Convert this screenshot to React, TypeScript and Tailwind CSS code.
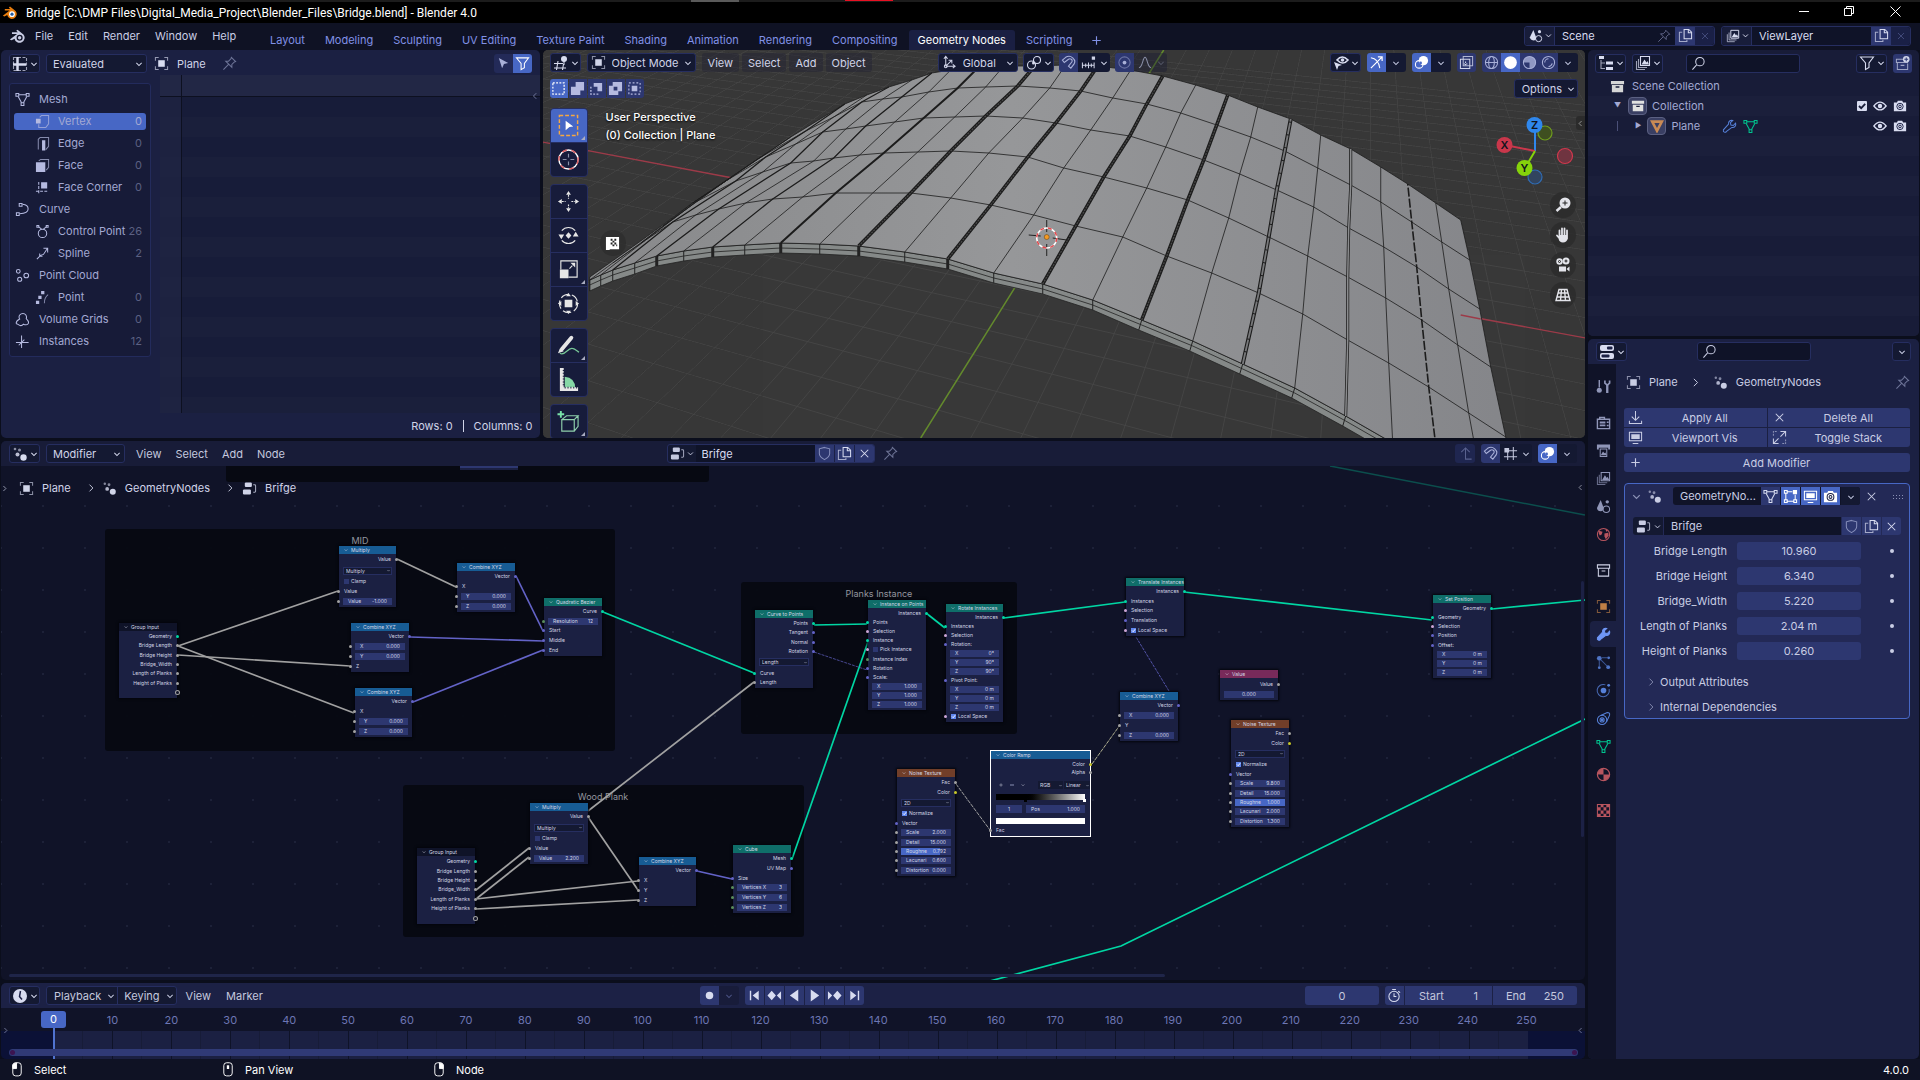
import React from "react";

type P = [number, number];

/* ---------- icons ---------- */

const SHAPES: Record<string, React.ReactNode> = {
  chev: <path d="M4.500 6.500 8 10l3.500-3.500" strokeWidth="1.400" />,
  chevR: <path d="M6 3.500 10.500 8 6 12.500" strokeWidth="1.200" />,
  chevL: <path d="M10 3.500 5.500 8l4.500 4.500" strokeWidth="1.200" />,
  x: <path d="M4 4l8 8M12 4l-8 8" strokeWidth="1.100" />,
  plus: <path d="M8 3.500v9M3.500 8h9" strokeWidth="1.200" />,
  object: (
    <>
      <path d="M1.500 5V1.500H5M11 1.500h3.500V5M14.500 11v3.500H11M5 14.500H1.500V11" opacity=".65" />
      <rect x="4.500" y="4.500" width="7" height="7" fill="currentColor" stroke="none" />
    </>
  ),
  pin: <path d="M10 1.500l4.500 4.500-1.500.5-2.500 2.500v3L4 5.500h3L9.500 3zM7 9l-5.500 5.500" opacity=".75" />,
  funnel: <path d="M1.500 2h13L10 8v4.500L6.500 14.500V8z" />,
  cursor: <path d="M3 2l10 5.500-4.500 1L6.500 13z" fill="currentColor" stroke="none" />,
  sheet: (
    <>
      <path d="M1.500 1.500h13v13h-13z" strokeDasharray="3 1.500" opacity=".7" />
      <path d="M5.500 1v14M1 8.500h13" strokeWidth="2.500" />
    </>
  ),
  view3d: (
    <>
      <path d="M1 8.500h9M1 13h12M5 6L3.500 15M10.500 9l-1 6" />
      <circle cx="11" cy="4" r="3" fill="currentColor" stroke="none" />
      <path d="M11 6v4" />
    </>
  ),
  geo: (
    <g fill="currentColor" stroke="none">
      <circle cx="11.500" cy="11.500" r="3.200" />
      <circle cx="5.500" cy="8.500" r="2" opacity=".85" />
      <circle cx="3" cy="3" r="1.300" opacity=".6" />
      <circle cx="7.500" cy="4" r="1.500" opacity=".6" />
    </g>
  ),
  tree: (
    <>
      <rect x="3" y="1.500" width="7.500" height="5" rx="1.200" fill="currentColor" stroke="none" />
      <rect x="1" y="9" width="8.500" height="5.500" rx="1.200" fill="currentColor" stroke="none" />
      <path d="M12 4h1.500q1 0 1 1v6q0 1-1 1H12" opacity=".8" />
    </>
  ),
  shield: <path d="M8 1.500l5.500 1.500v5c0 3-2.500 5-5.500 6.500C5 13 2.500 11 2.500 8V3z" opacity=".7" />,
  copy: (
    <>
      <path d="M6.500 1.500h5l3 3v7h-8z" />
      <path d="M11 1.500v3.500h3.500" />
      <path d="M4.500 4.500h-3v10h8v-2" opacity=".7" />
    </>
  ),
  search: (
    <>
      <circle cx="9.500" cy="6" r="4.500" />
      <path d="M6 9.500L1.500 14.500" />
    </>
  ),
  outliner: (
    <>
      <path d="M1 1h5v3H1zM8 6.500h7v3H8zM8 12h7v3H8z" fill="currentColor" stroke="none" />
      <path d="M3 5v8.500h4M3 8h4" opacity=".7" />
    </>
  ),
  layers: (
    <>
      <path d="M5.500 1.500h9v9h-9z" />
      <path d="M6.500 9.500l3-5 2 3 1-1.500 1.500 3.500z" fill="currentColor" stroke="none" />
      <path d="M3.500 4v8.500H12M1.500 6v8.500H10" opacity=".7" />
    </>
  ),
  scene: (
    <>
      <path d="M5 1l3 8q.5 4-3 4t-4-3.500z" fill="currentColor" stroke="none" />
      <circle cx="11" cy="11" r="3.500" />
      <circle cx="12" cy="3" r="1.800" fill="currentColor" stroke="none" />
    </>
  ),
  box: (
    <>
      <path d="M1 2h14v3.500H1zM2 6.500h12V14H2z" fill="currentColor" stroke="none" />
      <path d="M6 8.500h4" stroke="#181c38" strokeWidth="1.500" />
    </>
  ),
  boxLine: <path d="M1.500 2h13v3.500h-13zM2.500 5.500V14h11V5.500M6 8.500h4" />,
  boxPlus: (
    <>
      <path d="M9 3.500H1.500V7H14M2.500 7v7.500h11V8M6 10h4" opacity=".7" />
      <circle cx="12" cy="3.500" r="3.500" fill="currentColor" stroke="none" />
      <path d="M12 1.500v4M10 3.500h4" stroke="#2f3a75" />
    </>
  ),
  wrench: (
    <path d="M14.500 4.500l-2.500 2.500-2.500-.5-.5-2.500L11.500 1.500C9 .8 6.500 2.500 7 5.500L1.500 11.500q-.5 2 1 2.500t2-.5L10.500 9c3 .5 4.800-2 4-4.500z" />
  ),
  wrenchFill: (
    <path d="M14.500 4.500l-2.500 2.500-2.500-.5-.5-2.500L11.500 1.500C9 .8 6.500 2.500 7 5.500L1.500 11.500q-.5 2 1 2.500t2-.5L10.500 9c3 .5 4.800-2 4-4.500z" fill="currentColor" />
  ),
  mesh: (
    <>
      <path d="M4 3h8M3.500 5l3.500 6.500M12.500 5L9 11.500" />
      <path d="M1 1.500h3v3H1zM12 1.500h3v3h-3zM6.500 11.500h3v3h-3z" />
    </>
  ),
  tri: <path d="M2.500 3h11L8 13.500z" strokeWidth="3" />,
  eye: (
    <>
      <path d="M1 8q7-9 14 0-7 9-14 0z" strokeWidth="1.500" />
      <circle cx="8" cy="8" r="2.500" fill="currentColor" stroke="none" />
    </>
  ),
  camera: (
    <>
      <path d="M1 4h3.500L5.500 2h5l1 2H15v10H1z" fill="currentColor" stroke="none" />
      <circle cx="8" cy="8.500" r="3.600" stroke="#1c2145" />
      <circle cx="8" cy="8.500" r="1.500" stroke="#1c2145" />
    </>
  ),
  props: (
    <>
      <rect x="1" y="1" width="14" height="6" rx="2" fill="currentColor" stroke="none" />
      <rect x="1" y="9" width="14" height="6" rx="2" fill="currentColor" stroke="none" />
      <rect x="8" y="2.500" width="5.500" height="3" rx="1" fill="#1c2145" stroke="none" />
      <rect x="2.500" y="10.500" width="8" height="3" rx="1" fill="#1c2145" stroke="none" />
    </>
  ),
  tool: (
    <>
      <path d="M3.500 1v8" strokeWidth="1.500" />
      <path d="M12 6v9" strokeWidth="2.500" />
      <circle cx="3.500" cy="12" r="2.700" fill="currentColor" stroke="none" />
      <path d="M9.500 1.500v3l2.500 2 2.500-2v-3" strokeWidth="1.800" />
    </>
  ),
  render: (
    <>
      <path d="M1.500 4.500h13v10h-13zM4 4V2.500h5V4" strokeWidth="1.500" />
      <path d="M4 8h6M4 11h6" strokeWidth="2" />
      <path d="M12.500 7v1.500M12.500 10.500v1.500" strokeWidth="2" />
    </>
  ),
  output: (
    <>
      <path d="M1 1.500h14V7h-2V5H3v2H1z" fill="currentColor" stroke="none" />
      <path d="M4.500 6.500h7v8h-7z" />
      <path d="M5 13l2.500-4 1.500 2 1-1 1.500 3z" fill="currentColor" stroke="none" />
    </>
  ),
  world: (
    <>
      <circle cx="8" cy="8" r="6.500" />
      <path d="M3 4l4 1-1 3-2 1-1-2zM9 7l4-1 .5 3-3 4-1.500-3zM10 2l3 2-2 1z" fill="currentColor" stroke="none" />
    </>
  ),
  particles: (
    <>
      <circle cx="3.500" cy="3.500" r="2.500" fill="currentColor" stroke="none" />
      <circle cx="13.500" cy="3" r="1.500" fill="currentColor" stroke="none" />
      <circle cx="13" cy="13" r="2" fill="currentColor" stroke="none" />
      <circle cx="3.500" cy="13.500" r="1.500" fill="currentColor" stroke="none" />
      <path d="M6 3h6M3.500 6v6M5 5l7 7" opacity=".7" />
    </>
  ),
  physics: (
    <>
      <path d="M10 2A6.500 6.500 0 1 0 14 6.500" opacity=".8" />
      <circle cx="8" cy="8" r="3" fill="currentColor" stroke="none" />
      <circle cx="13.500" cy="2.500" r="1.500" fill="currentColor" stroke="none" />
    </>
  ),
  constraint: (
    <>
      <circle cx="6.500" cy="9.500" r="5" />
      <circle cx="6.500" cy="9.500" r="2.200" />
      <path d="M5 4.700L12 1.500q3 0 2.500 3L11.300 11.500" />
      <circle cx="6.500" cy="9.500" r="1" fill="currentColor" />
    </>
  ),
  material: (
    <>
      <circle cx="8" cy="8" r="6.500" strokeWidth="1.300" />
      <path d="M8 8V1.500A6.500 6.500 0 0 0 1.500 8zM8 8v6.500A6.500 6.500 0 0 0 14.500 8z" fill="currentColor" stroke="none" />
    </>
  ),
  checker: (
    <>
      <path d="M1.500 1.500h13v13h-13z" />
      <path d="M5 1h3v3.500H5zM11 1h3.500v3.500H11zM1.500 4.500H5V8H1.500zM8 4.500h3V8H8zM5 8h3v3.500H5zM11 8h3.500v3.500H11zM1.500 11.500H5V15H1.500zM8 11.500h3V15H8z" fill="currentColor" stroke="none" />
    </>
  ),
  download: <path d="M8 1v9.500M4 7l4 4 4-4M1.500 11.500v3h13v-3" />,
  monitor: (
    <>
      <path d="M1.500 2.500h13v9h-13zM5 14.500h6" />
      <path d="M3.500 4.500h9v5h-9z" fill="currentColor" stroke="none" />
    </>
  ),
  expand: (
    <>
      <path d="M9 1.500h5.500V7M14 2L9 7M7 14.500H1.500V9M2 14l5-5" />
      <path d="M1.500 6V1.500H6M14.500 10v4.500H10" strokeDasharray="2 1" opacity=".6" />
    </>
  ),
  editbox: (
    <>
      <path d="M3 4v8M4 13h8M13 12V6M4 3h6" />
      <path d="M1.500 1.500h3v3h-3zM1.500 11.500h3v3h-3zM11.500 11.500h3v3h-3z" />
      <path d="M10.500 1H15v4.500h-4.500z" fill="currentColor" stroke="none" />
    </>
  ),
  axes: (
    <>
      <path d="M4 12V2M2 4l2-2.500L6 4M4 12h9.500M11.500 10l2.500 2-2.500 2M4 12l6-6M7 5.500h3.500V9" />
      <circle cx="4" cy="12" r="1.500" />
    </>
  ),
  pivot: (
    <>
      <circle cx="5.500" cy="10" r="4" />
      <circle cx="11" cy="5" r="3.500" />
      <circle cx="7.500" cy="8" r="1.500" fill="currentColor" stroke="none" />
    </>
  ),
  magnet: <path d="M1.500 5.500L5 2.500q4-2.500 7.500.5T14 9.500L10.500 14 8 12l3.500-4.500q1-2-.5-3T8 4.500L3.500 8z" strokeWidth="1.200" />,
  snap: (
    <>
      <path d="M1 11h13M1.500 8v6M5 9v4M8 8v6M11 9v4M14 8v6" />
      <path d="M11.500 1.500H15V5h-3.500z" fill="currentColor" stroke="none" />
    </>
  ),
  snapNode: (
    <>
      <path d="M5 6v9M11 1v14M1 11.500h14M6 5h9" />
      <path d="M1.500 2h5v5h-5z" fill="currentColor" stroke="none" />
    </>
  ),
  dotring: (
    <>
      <circle cx="8" cy="8" r="6" opacity=".5" />
      <circle cx="8" cy="8" r="2" fill="currentColor" stroke="none" />
    </>
  ),
  bell: <path d="M1 13.500c4 0 4-11 6.500-11s2.500 11 6.500 11" />,
  eyeCursor: (
    <>
      <path d="M4 5q5-6 11 0-5 6-11 0z" strokeWidth="1.600" />
      <circle cx="9.500" cy="5" r="1.800" fill="currentColor" stroke="none" />
      <path d="M1 7l8 3-3.500 1L4 15z" fill="currentColor" stroke="none" />
    </>
  ),
  gizmo: (
    <>
      <path d="M2 14L13.500 2.500M9.500 2h4.500v4.500" strokeWidth="1.300" />
      <path d="M2 3q8 1 9.500 11" />
    </>
  ),
  overlay: (
    <>
      <circle cx="10" cy="6" r="5" fill="currentColor" stroke="none" />
      <circle cx="5.500" cy="10" r="4" />
      <circle cx="7" cy="8.500" r="1.500" fill="#4767c5" stroke="none" />
    </>
  ),
  xray: (
    <>
      <path d="M4.500 1.500h10v10h-10z" opacity=".8" />
      <path d="M1.500 4.500h10v10h-10z" />
      <path d="M7 7v5M5 9.500h4" strokeDasharray="1.500 1" />
    </>
  ),
  wire: (
    <>
      <circle cx="8" cy="8" r="6.500" />
      <ellipse cx="8" cy="8" rx="3" ry="6.500" />
      <path d="M1.500 8h13" />
    </>
  ),
  solid: <circle cx="8" cy="8" r="6.800" fill="currentColor" stroke="none" />,
  matprev: (
    <>
      <circle cx="8" cy="8" r="6.500" />
      <path d="M8 1.500A6.500 6.500 0 0 0 1.500 8H8v6.500A6.500 6.500 0 0 0 11 2.200z" fill="currentColor" stroke="none" opacity=".8" />
    </>
  ),
  rendered: (
    <>
      <circle cx="8" cy="8" r="6.500" />
      <path d="M4 8a4 4 0 0 1 4-4M12 9a5 5 0 0 1-4 3.500" />
    </>
  ),
  up: <path d="M3.500 6.500L8 2l4.500 4.500M8 2v12h6.500" />,
  clock: (
    <>
      <circle cx="8" cy="8" r="7" fill="currentColor" stroke="none" />
      <path d="M8.500 3L7.500 8.500 10 11.500" stroke="#1c2145" strokeWidth="1.500" />
    </>
  ),
  stopwatch: (
    <>
      <circle cx="7.500" cy="9" r="5.500" />
      <path d="M7.500 5.500V9H10M5.500 1.500h4M12 3.500l2 1.500" />
    </>
  ),
  record: <circle cx="8" cy="8" r="4" fill="currentColor" stroke="none" />,
  first: <path d="M3 3h1.500v10H3zM12.500 3v10L6 8z" fill="currentColor" stroke="none" />,
  last: <path d="M13 3h-1.500v10H13zM3.500 3v10L10 8z" fill="currentColor" stroke="none" />,
  prevKey: <path d="M5 3l4.500 5L5 13 .5 8zM15 3.500v9L10.500 8z" fill="currentColor" stroke="none" />,
  nextKey: <path d="M11 3l4.500 5-4.500 5-4.500-5zM1 3.500v9L5.500 8z" fill="currentColor" stroke="none" />,
  playBack: <path d="M12 1.500v13L3 8z" fill="currentColor" stroke="none" />,
  play: <path d="M4 1.500v13L13 8z" fill="currentColor" stroke="none" />,
  vertex: (
    <>
      <path d="M5 3.500L7 1.500h7.500v9l-3 4H4V11" opacity=".7" />
      <path d="M1 5h5v5H1z" fill="currentColor" stroke="none" />
    </>
  ),
  edge: (
    <>
      <path d="M3.500 14.500v-11l2-2h9v9.500l-3 3.500" opacity=".7" />
      <path d="M7.500 4.500H11v11H7.500z" fill="currentColor" stroke="none" />
    </>
  ),
  face: (
    <>
      <path d="M4 3l2-1.500h8.500V10L12 13" opacity=".7" />
      <path d="M1 4.500h10V15H1z" fill="currentColor" stroke="none" />
    </>
  ),
  corner: (
    <>
      <path d="M4 2v13M1 12h13" strokeDasharray="3 1.500" />
      <path d="M6.500 2.500H13V9H6.500z" fill="currentColor" stroke="none" />
    </>
  ),
  curve: (
    <>
      <path d="M8 2.500q6 .5 6 5T5 12.500" />
      <path d="M4.500 1.500h3v3h-3zM1.500 11.500h3v3h-3z" />
    </>
  ),
  control: (
    <>
      <circle cx="8" cy="10" r="4.500" />
      <path d="M4 3l3 2.500M12 3L9 5.500" />
      <path d="M2 1.500h2v2H2zM12 1.500h2v2h-2z" />
    </>
  ),
  spline: <path d="M2 14l4-4 3-1 4-6M9 2.500h4.500V7M5 8v3h3" />,
  cloud: (
    <>
      <circle cx="3.500" cy="3.500" r="2" />
      <circle cx="12" cy="8" r="2.500" />
      <circle cx="5" cy="12" r="2.200" />
    </>
  ),
  point: (
    <>
      <path d="M6.500 1H10v3.500H6.500zM3.500 6H7v3.500H3.500zM1 11.500h3.500V15H1z" fill="currentColor" stroke="none" />
      <path d="M14 5q-4 3-4 9" opacity=".7" />
    </>
  ),
  volume: <path d="M5 7.500C3 4 6 1.500 8.500 1.500S13 4 12 7q3.500 3.500 2 5.500t-5 .5q-2 2.500-4.500 1t-3-1.500q-1-2.500 3.500-5z" />,
  instances: <path d="M7 1.500v12M2 9h12.500M10 6l-6 6M1 9h3M7 11v4" />,
};

function Icon({ n, c = "", s = 15 }: { n: string; c?: string; s?: number }) {
  return (
    <svg viewBox="0 0 16 16" width={s} height={s} fill="none" stroke="currentColor" strokeWidth="1.100" className={`shrink-0 ${c}`} aria-hidden="true">
      {SHAPES[n]}
    </svg>
  );
}

/* ---------- shared widgets ---------- */

const BOX = "h-[19px] rounded-[3px] border border-[#262e60] bg-[#141932]";

function EditorBtn({ icon, label }: { icon: string; label: string }) {
  return (
    <button aria-label={label} className={`${BOX} flex w-[31px] shrink-0 items-center justify-between pl-[2px] text-[#d8dcf0]`}>
      <Icon n={icon} s={16} />
      <Icon n="chev" s={12} />
    </button>
  );
}

function Drop({ label, value, w, icon }: { label: string; value: string; w: string; icon?: string }) {
  return (
    <div className={`${BOX} ${w} relative flex shrink-0 items-center text-[#d0d4e8]`}>
      {icon && <Icon n={icon} c="ml-[3px]" />}
      <select aria-label={label} className="h-full min-w-0 flex-1 appearance-none bg-transparent px-[6px] outline-none">
        <option>{value}</option>
      </select>
      <Icon n="chev" s={12} c="pointer-events-none absolute right-px" />
    </div>
  );
}

function Btn({ icon, label, on, c = "" }: { icon: string; label: string; on?: boolean; c?: string }) {
  return (
    <button aria-label={label} className={`flex h-[19px] w-[19px] shrink-0 items-center justify-center ${on ? "bg-[#4767c5] text-white" : "bg-[#2d3770] text-[#a9b0d8]"} ${c}`}>
      <Icon n={icon} />
    </button>
  );
}

function Arrow({ label, c = "" }: { label: string; c?: string }) {
  return (
    <button aria-label={label} className={`flex h-[19px] w-[20px] shrink-0 items-center justify-center bg-[#141932] text-[#c0c5de] ${c}`}>
      <Icon n="chev" s={12} />
    </button>
  );
}

/* ---------- top bars ---------- */

function BlenderMark({ color, eye, c }: { color: string; eye: string; c: string }) {
  return (
    <svg viewBox="0 0 20 16" className={c} aria-hidden="true">
      <path d="M1 11.500L9.500 5H3.500V3h7L8.500 1.300 10 0l7 5.500a6 6 0 1 1-10.500 5L3 12.500z" fill={color} />
      <circle cx="12.500" cy="9.500" r="3.600" fill={eye === "#255a9b" ? "#fff" : "#101328"} />
      <circle cx="12.500" cy="9.500" r="2" fill={eye} />
    </svg>
  );
}

function TitleBar() {
  return (
    <header className="relative flex h-[23px] shrink-0 items-center bg-black pt-[2px] pr-[2px] text-white">
      <div className="absolute inset-x-0 top-0 h-[2px] bg-[#1c1c1c]">
        <div className="absolute left-[36%] h-[2px] w-[48px] bg-[#5a5a5a]" />
        <div className="absolute left-[44%] h-px w-[48px] bg-[#e81123]" />
      </div>
      <BlenderMark color="#e87d0d" eye="#255a9b" c="ml-[2px] h-[14px] w-[16px]" />
      <h1 className="ml-[8px] flex-1 font-[Roboto,sans-serif] text-[12px] leading-[16px]">
        Bridge [C:\DMP Files\Digital_Media_Project\Blender_Files\Bridge.blend] - Blender 4.0
      </h1>
      <button aria-label="Minimize" className="flex h-[20px] w-[46px] items-center justify-center pb-[3px]">
        <svg width="10" height="10" stroke="#fff" aria-hidden="true"><path d="M0 5.500h10" /></svg>
      </button>
      <button aria-label="Restore" className="flex h-[20px] w-[45px] items-center justify-center pb-[3px]">
        <svg width="11" height="11" stroke="#fff" fill="none" aria-hidden="true"><path d="M.5 2.500h7v7h-7zM2.500 2.500v-2h7v7h-2" /></svg>
      </button>
      <button aria-label="Close" className="flex h-[20px] w-[46px] items-center justify-center pb-[3px]">
        <svg width="11" height="11" stroke="#fff" aria-hidden="true"><path d="M.5.5l10 10M10.500.5l-10 10" /></svg>
      </button>
    </header>
  );
}

const TABS = ["Layout", "Modeling", "Sculpting", "UV Editing", "Texture Paint", "Shading", "Animation", "Rendering", "Compositing", "Geometry Nodes", "Scripting"];

function DataBlock({ icon, name, w, pin }: { icon: string; name: string; w: string; pin?: boolean }) {
  return (
    <div className="flex h-[20px] items-center rounded-[3px] border border-[#262e60] bg-[#0f1328]">
      <button aria-label={`Browse ${name}`} className="flex h-full w-[30px] items-center justify-between rounded-l-[3px] border-r border-[#262e60] bg-[#181d3a] pl-[4px] text-[#d8dcf0]">
        <Icon n={icon} s={14} />
        <Icon n="chev" s={11} />
      </button>
      <input aria-label={`${name} name`} defaultValue={name} className={`${w} bg-transparent px-[7px] text-[#d8dcf0] outline-none`} />
      {pin && <Icon n="pin" s={14} c="mr-[4px] text-[#7c82a8]" />}
      <button aria-label={`New ${name}`} className="flex h-full w-[20px] items-center justify-center bg-[#2d3770] text-[#d8dcf0]">
        <Icon n="copy" />
      </button>
      <button aria-label={`Delete ${name}`} className="flex h-full w-[19px] items-center justify-center rounded-r-[3px] bg-[#1a2046] text-[#4a5284]">
        <Icon n="x" s={12} />
      </button>
    </div>
  );
}

function TopBar() {
  return (
    <div className="flex h-[27px] shrink-0 items-center bg-[#0f1224]">
      <BlenderMark color="#c9cde4" eye="#c9cde4" c="ml-[9px] h-[15px] w-[17px]" />
      <nav aria-label="Main menu" className="ml-[9px] flex w-[226px] gap-[15px] pb-[2px] text-[#c9cde4]">
        {["File", "Edit", "Render", "Window", "Help"].map((m) => (
          <button key={m}>{m}</button>
        ))}
      </nav>
      <div role="tablist" className="flex h-[20px] flex-1 items-center gap-[2px] self-end text-[#8191e6]">
        {TABS.map((t) => (
          <button key={t} role="tab" aria-selected={t === "Geometry Nodes"} className={`h-full rounded-t-[3px] px-[9px] whitespace-nowrap ${t === "Geometry Nodes" ? "bg-[#1a1f42] text-white" : ""}`}>
            {t}
          </button>
        ))}
        <button aria-label="Add workspace" className="ml-[6px]"><Icon n="plus" /></button>
      </div>
      <div className="mr-[9px] flex gap-[6px] pb-[2px]">
        <DataBlock icon="scene" name="Scene" w="w-[102px]" pin />
        <DataBlock icon="layers" name="ViewLayer" w="w-[119px]" />
      </div>
    </div>
  );
}

/* ---------- spreadsheet ---------- */

const DOMAINS: [string, string, string, number][] = [
  ["mesh", "Mesh", "", 0],
  ["vertex", "Vertex", "0", 1],
  ["edge", "Edge", "0", 1],
  ["face", "Face", "0", 1],
  ["corner", "Face Corner", "0", 1],
  ["curve", "Curve", "", 0],
  ["control", "Control Point", "26", 1],
  ["spline", "Spline", "2", 1],
  ["cloud", "Point Cloud", "", 0],
  ["point", "Point", "0", 1],
  ["volume", "Volume Grids", "0", 0],
  ["instances", "Instances", "12", 0],
];

function Spreadsheet() {
  return (
    <section className="flex w-[34%] flex-col overflow-hidden rounded-[5px] bg-[#1b2042]">
      <div className="flex h-[25px] shrink-0 items-center px-[8px] pt-[2px]">
        <EditorBtn icon="sheet" label="Spreadsheet editor" />
        <div className="w-[6px]" />
        <Drop label="Evaluation state" value="Evaluated" w="w-[101px]" />
        <Icon n="object" c="ml-[7px] text-[#d8dcf0]" />
        <span className="ml-[8px] text-[#d0d4e8]">Plane</span>
        <Icon n="pin" c="ml-[16px] text-[#8a90b4]" />
        <div className="flex-1" />
        <Btn icon="cursor" label="Selected only" c="rounded-l-[3px] bg-[#232a58]!" />
        <Btn icon="funnel" label="Filter" on c="rounded-r-[3px]" />
      </div>
      <div className="flex min-h-0 flex-1">
        <ul className="m-[8px] mr-[9px] flex h-[274px] w-[142px] shrink-0 flex-col rounded-[3px] border border-[#232b5c] bg-[#171b38] px-[4px] pt-[4px] text-[#a3a9d3]">
          {DOMAINS.map(([icon, name, count, lvl]) => (
            <li key={name} className="flex h-[22px] items-center">
              <button className={`flex h-[17px] w-full items-center rounded-[3px] pr-[4px] ${lvl ? "pl-[21px]" : "pl-px"} ${name === "Vertex" ? "bg-[#4767c5]" : ""}`}>
                <Icon n={icon} c="text-[#b5bae0]" />
                <span className={`flex-1 text-left whitespace-nowrap ${lvl ? "ml-[8px]" : "ml-[9px]"}`}>{name}</span>
                <span className={name === "Vertex" ? "text-[#a3a9d3]" : "text-[#5b6082]"}>{count}</span>
              </button>
            </li>
          ))}
        </ul>
        <div className="relative flex min-w-0 flex-1 flex-col bg-[#191e3a]">
          <div className="flex h-[22px] shrink-0 border-b border-[#0d1020] bg-[#222745]">
            <div className="w-[22px] border-r border-[#0d1020]" />
          </div>
          <div className="flex-1 bg-[repeating-linear-gradient(#171c39_0_20px,#1a1f3b_20px_40px)]">
            <div className="h-full w-[22px] border-r border-[#0d1020] bg-[#2227459e]" />
          </div>
          <span className="absolute top-[14px] right-0 flex h-[14px] items-center text-[#8a90b4]"><Icon n="chevL" s={10} /></span>
        </div>
      </div>
      <div className="flex h-[25px] shrink-0 items-center justify-end gap-[10px] pr-[7px] text-[#d0d4e8]">
        <span>Rows: 0</span>
        <span className="h-[12px] w-px bg-[#d0d4e8]" />
        <span>Columns: 0</span>
      </div>
    </section>
  );
}

/* ---------- 3D viewport ---------- */

/* Each rib runs from the front edge of the bridge to the back edge. */
const RIBS: { p: P[]; k: number }[] = [
  { k: 0, p: [[589, 280], [612, 263], [640, 243], [662, 226], [692, 203], [731, 177]] },
  { k: 0, p: [[600, 275], [645, 240], [695, 202], [725, 181], [757, 159], [790, 137]] },
  { k: 1, p: [[612, 270], [672, 222], [735, 181], [765, 157], [805, 131], [844, 104]] },
  { k: 0, p: [[634, 263], [695, 215], [762, 172], [795, 144], [833, 117], [866, 95]] },
  { k: 2, p: [[656, 256], [718, 209], [790, 163], [822, 132], [861, 102], [888, 87]] },
  { k: 0, p: [[683, 251], [745, 203], [813, 161], [845, 129], [882, 99], [911, 80]] },
  { k: 2, p: [[712, 247], [772, 199], [833, 158], [865, 126], [901, 97], [931, 73]] },
  { k: 0, p: [[744, 245], [802, 197], [859, 155], [894, 122], [928, 92], [950, 70]] },
  { k: 3, p: [[780, 243], [835, 193], [883, 153], [923, 118], [957, 88], [977, 68]] },
  { k: 0, p: [[819, 244], [872, 193], [917, 152], [954, 117], [985, 87], [1003, 66]] },
  { k: 4, p: [[858, 246], [910, 193], [950, 151], [985, 116], [1017, 86], [1034, 66]] },
  { k: 0, p: [[904, 252], [950, 198], [988, 153], [1022, 118], [1049, 88], [1065, 65]] },
  { k: 4, p: [[947, 259], [990, 205], [1027, 157], [1055, 123], [1080, 91], [1097, 66]] },
  { k: 0, p: [[993, 273], [1033, 215], [1063, 168], [1090, 130], [1112, 98], [1130, 70]] },
  { k: 4, p: [[1042, 284], [1075, 226], [1103, 177], [1129, 136], [1146, 104], [1162, 76]] },
  { k: 0, p: [[1092, 300], [1122, 237], [1146, 188], [1165, 147], [1180, 113], [1195, 85]] },
  { k: 5, p: [[1141, 320], [1166, 256], [1187, 200], [1203, 160], [1216, 125], [1227, 95]] },
  { k: 0, p: [[1192, 341], [1211, 273], [1228, 218], [1239, 174], [1250, 137], [1257, 107]] },
  { k: 6, p: [[1242, 364], [1258, 293], [1268, 237], [1276, 190], [1284, 151], [1290, 119]] },
  { k: 0, p: [[1294, 388], [1302, 314], [1307, 256], [1313, 207], [1317, 168], [1320, 135]] },
  { k: 7, p: [[1345, 416], [1347, 340], [1347, 277], [1348, 228], [1350, 185], [1350, 149]] },
  { k: 0, p: [[1392, 443], [1388, 363], [1385, 298], [1383, 247], [1380, 202], [1380, 167]] },
  { k: 8, p: [[1438, 470], [1428, 387], [1421, 320], [1416, 267], [1411, 222], [1407, 184]] },
  { k: 0, p: [[1485, 505], [1468, 413], [1457, 345], [1448, 289], [1441, 242], [1435, 203]] },
  { k: 0, p: [[1525, 530], [1505, 437], [1490, 367], [1479, 309], [1469, 260], [1460, 220]] },
];

const line = (pts: P[]) => pts.map((p) => p.join(",")).join(" ");

function BridgeDrawing() {
  const front = RIBS.map((r) => r.p[0]);
  const back = RIBS.map((r) => r.p[5]);
  const under = front.map(([x, y]): P => [x - (x > 1100 ? 3 : 0), y + (x < 640 ? 11 : 10)]);
  const mid = front.map(([x, y]): P => [x, y + 5]);
  const right = [...RIBS[RIBS.length - 1].p];
  const last = RIBS.length - 1;
  const sil: P[] = [...front, ...right.slice(1), ...[...back].reverse(), [692, 203], [640, 241], [589, 277]];
  const gridY = Array.from({ length: 70 }, (_, i) => 920 + (i - 38) * 50);
  const gridX = Array.from({ length: 50 }, (_, i) => 2117 - (i - 20) * 135);
  return (
    <svg viewBox="542 50 1043 388" preserveAspectRatio="xMidYMid slice" className="absolute inset-0 h-full w-full" role="img" aria-label="Bridge model in perspective">
      <defs>
        <linearGradient id="deck" x1="0" x2="1">
          <stop offset="0" stopColor="#88898b" />
          <stop offset=".45" stopColor="#969799" />
          <stop offset="1" stopColor="#848589" />
        </linearGradient>
      </defs>
      <rect x="542" y="50" width="1043" height="388" fill="#383838" />
      <g stroke="#484848" strokeWidth="1">
        {gridY.map((x) => <line key={x} x1="1370" y1="-282" x2={1370 + (x - 1370) * 1.2} y2={-282 + 720 * 1.2} opacity=".8" />)}
        {gridX.map((x) => <line key={x} x1="-1157" y1="-177" x2={-1157 + (x + 1157) * 2} y2={-177 + 615 * 2} opacity=".8" />)}
      </g>
      <path d="M542 142L732 178M1460 315L1585 338" stroke="#9c3a48" strokeWidth="1.300" />
      <path d="M1163 50L920 438" stroke="#638a2c" strokeWidth="1.500" />
      <polygon points={line([...front, ...[...under].reverse()])} fill="#858988" stroke="#222" strokeWidth=".8" />
      <polyline points={line(mid)} fill="none" stroke="#222" strokeWidth=".8" />
      {front.map(([x, y], i) => (
        <line key={i} x1={x} y1={y} x2={under[i][0]} y2={under[i][1]} stroke="#222" strokeWidth={RIBS[i].k > 1 && x < 1000 ? 3 : 1} />
      ))}
      <polygon points={line(sil)} fill="url(#deck)" stroke="#1c1c1c" strokeWidth=".8" />
      <g fill="none" stroke="#1c1c1c">
        {[1, 2, 3, 4].map((i) => <polyline key={i} points={line(RIBS.map((r) => r.p[i]))} strokeWidth=".8" />)}
        {RIBS.slice(0, last).map((r, i) => {
          const w = r.k === 0 ? 0.8 : r.k < 3 ? 1.3 : r.k === 3 ? 2 : r.k < 6 ? 3.6 : r.k === 6 ? 4 : r.k === 7 ? 3 : 1.6;
          return (
            <g key={i}>
              <polyline points={line(r.p)} strokeWidth={w} strokeDasharray={r.k === 8 ? "9 2" : undefined} />
              {r.k > 3 && r.k < 6 && <polyline points={line(r.p)} stroke="#4a4a4a" strokeWidth="1.200" strokeDasharray="2 1" />}
              {r.k === 6 && <polyline points={line(r.p)} stroke="#77787a" strokeWidth="1.800" strokeDasharray="12 1" />}
              {r.k === 7 && <polyline points={line(r.p)} stroke="#8a8b8d" strokeWidth="1.500" />}
            </g>
          );
        })}
      </g>
      <path d="M1460 315L1480 319" stroke="#9c3a48" strokeWidth="1.300" />
      <g fill="none">
        <path d="M1046 220v12M1046 244v12M1028 235l12 1M1052 238l14 2" stroke="#222" />
        <circle cx="1046" cy="238" r="10" stroke="#fff" strokeWidth="1.500" />
        <circle cx="1046" cy="238" r="10" stroke="#e0484c" strokeWidth="1.500" strokeDasharray="4 4" />
        <circle cx="1046" cy="237" r="2.500" fill="#f59a23" stroke="#5a3a10" strokeWidth=".5" />
      </g>
    </svg>
  );
}

function AxisGizmo() {
  return (
    <svg viewBox="0 0 80 80" className="absolute top-[62px] right-[10px] h-[80px] w-[80px]" role="img" aria-label="View axes">
      <path d="M40 39V13" stroke="#2f87ec" strokeWidth="2" />
      <path d="M40 39L10 33" stroke="#c9374b" strokeWidth="2" />
      <path d="M40 39L30 56" stroke="#86d30b" strokeWidth="2" />
      <circle cx="50" cy="21" r="7" fill="#3f4f20" stroke="#6f9c1e" strokeWidth="1.200" />
      <circle cx="70" cy="44" r="7.500" fill="#6f3440" stroke="#d0384d" strokeWidth="1.200" />
      <circle cx="40" cy="65" r="7" fill="#31445f" stroke="#2f6cb4" strokeWidth="1.200" />
      <circle cx="39.500" cy="13" r="8" fill="#2f87ec" />
      <circle cx="9.500" cy="33" r="8" fill="#c9374b" />
      <circle cx="29.500" cy="56" r="8" fill="#86d30b" />
      <g fontSize="11" fontWeight="600" textAnchor="middle" fill="#10131c">
        <text x="39.500" y="17">Z</text>
        <text x="9.500" y="37">X</text>
        <text x="29.500" y="60">Y</text>
      </g>
    </svg>
  );
}

const TOOLS: { name: string; more?: boolean; art: React.ReactNode }[][] = [
  [
    {
      name: "Select Box",
      more: true,
      art: (
        <>
          <rect x="2.500" y="1.500" width="19" height="21" stroke="#f5a742" strokeWidth="1.500" strokeDasharray="4 2" />
          <path d="M9 7l8 6-4 .5L9 17z" fill="#fff" stroke="none" />
        </>
      ),
    },
    {
      name: "Cursor",
      art: (
        <>
          <circle cx="12" cy="12" r="10" stroke="#fff" strokeWidth="1.500" />
          <circle cx="12" cy="12" r="10" stroke="#d85a5e" strokeWidth="1.500" strokeDasharray="5 5" />
          <path d="M12 6v4M12 14v4M6 12h4M14 12h4" stroke="#8a90a8" />
        </>
      ),
    },
  ],
  [
    {
      name: "Move",
      art: (
        <>
          <path d="M12 1l2.500 4h-5zM12 23l2.500-4h-5zM1 12l4-2.500v5zM23 12l-4-2.500v5z" fill="#e6e6e6" stroke="none" />
          <path d="M12 5v4M12 15v4M5 12h4M15 12h4" strokeDasharray="2 1" />
        </>
      ),
    },
    {
      name: "Rotate",
      art: (
        <>
          <path d="M5 7a9 9 0 0 1 14 0M19 17a9 9 0 0 1-14 0" />
          <path d="M1.500 11h6l-3 5zM16.500 13h6l-3-5zM12 8.500l3 3.500-3 3.500L9 12z" fill="#e6e6e6" stroke="none" />
        </>
      ),
    },
    {
      name: "Scale",
      more: true,
      art: (
        <>
          <path d="M4 12V3h17v17h-9" />
          <path d="M3 12h9v9H3z" fill="#e6e6e6" stroke="none" />
          <path d="M13 11l3-3" />
          <path d="M19 5v5l-5-5z" fill="#e6e6e6" stroke="none" />
        </>
      ),
    },
    {
      name: "Transform",
      art: (
        <>
          <circle cx="12" cy="12" r="9.500" strokeDasharray="9 3" />
          <path d="M8 8h8v8H8zM12 1l2.500 3.500h-5zM12 23l2.500-3.500h-5zM1 12l3.500-2.500v5zM23 12l-3.500-2.500v5z" fill="#e6e6e6" stroke="none" />
        </>
      ),
    },
  ],
  [
    {
      name: "Annotate",
      more: true,
      art: (
        <>
          <path d="M5 16L15 4" strokeWidth="4" strokeLinecap="round" />
          <path d="M1 20l2-5 4 3z" fill="#e6e6e6" stroke="none" />
          <path d="M3 20c5 4 8-6 13-5 3 .5 4 2 7 4" stroke="#78c898" />
        </>
      ),
    },
    {
      name: "Measure",
      art: (
        <>
          <path d="M8 21V9q11 1 11 12z" fill="#86d8a6" stroke="none" />
          <path d="M5 0v22h17" strokeWidth="4" />
          <path d="M7 2v18M8 20.500h14" stroke="#171c3b" strokeDasharray="1 2" strokeWidth="2" />
        </>
      ),
    },
  ],
  [
    {
      name: "Add Cube",
      more: true,
      art: (
        <>
          <path d="M5 10h13v12H5zM5 10l5-4h12l-4 4M22 6v11l-4 5" stroke="#8fd0ac" />
          <path d="M4 1v7M.5 4.500h7" stroke="#78e0a8" strokeWidth="2" />
        </>
      ),
    },
  ],
];

const NAV: [string, React.ReactNode][] = [
  ["Zoom", <g key="z"><circle cx="10" cy="6" r="5.500" fill="#e3e4ea" stroke="none" /><path d="M6 10L1.500 14" strokeWidth="2.500" /><path d="M10 3.500v5M7.500 6h5" stroke="#222" /></g>],
  ["Pan", <path d="M4.500 9V3.500M7 8V1.500M9.500 8V1.500M12 9V3.500M2 8.500l3 3.500M5 9h7v2.500q-1 3-4 3t-3.500-3z" strokeWidth="1.800" strokeLinecap="round" strokeLinejoin="round" fill="#e3e4ea" key="h" />],
  ["Camera view", <g key="c"><circle cx="4.500" cy="4.500" r="3.200" fill="#e3e4ea" stroke="none" /><circle cx="11" cy="4" r="3.500" fill="#e3e4ea" stroke="none" /><path d="M4 9.500h7v5H4zM11.500 12l3-2.500v5z" fill="#e3e4ea" stroke="none" /><circle cx="4.500" cy="4.500" r="1" stroke="#222" /><circle cx="11" cy="4" r="1" stroke="#222" /></g>],
  ["Toggle projection", <path d="M4 2.500h8l3 11H1zM3 6h10M2 10h12M6.500 2.500l-1 11M9.500 2.500l1 11" strokeWidth="1.400" key="p" />],
];

const SELECT_MODES: React.ReactNode[] = [
  <path key="a" d="M2 2h12v12H2z" strokeDasharray="2 1.500" strokeWidth="1.300" />,
  <path key="b" d="M6 1h9v9h-4v5H1V6h5z" fill="currentColor" stroke="none" />,
  <g key="c"><path d="M5 2h9v9H9V6H5z" fill="currentColor" stroke="none" /><path d="M2 6v8h8" strokeDasharray="2 1.500" strokeWidth="1.500" /></g>,
  <path key="d" d="M5 1h10v10h-4v4H1V5h4zM6 6v4h4V6z" fill="currentColor" stroke="none" fillRule="evenodd" />,
  <g key="e"><path d="M2 2h12v12H2z" strokeDasharray="2 2" strokeWidth="1.200" /><path d="M5 5h6v6H5z" fill="currentColor" stroke="none" /></g>,
];

function Viewport() {
  return (
    <section className="relative min-w-0 flex-1 overflow-hidden rounded-[5px] bg-[#383838]">
      <BridgeDrawing />
      <div className="relative flex h-full flex-col px-[7px] pt-[3px]">
        <div className="flex items-center text-[#d0d4e8]">
          <EditorBtn icon="view3d" label="3D Viewport editor" />
          <div className="w-[6px]" />
          <Drop label="Mode" value="Object Mode" w="w-[109px]" icon="object" />
          <div className="ml-[6px] flex gap-[3px]">
            {["View", "Select", "Add", "Object"].map((m) => <button key={m} className="h-[19px] rounded-[3px] bg-[#23243480] px-[6px]">{m}</button>)}
          </div>
          <div className="flex flex-1 items-center gap-[5px] pl-[66px]">
            <Drop label="Transform orientation" value="Global" w="w-[80px]" icon="axes" />
            <EditorBtn icon="pivot" label="Pivot point" />
            <div className="flex overflow-hidden rounded-[3px]">
              <Btn icon="magnet" label="Snap" />
              <button aria-label="Snap to" className="flex h-[19px] w-[32px] items-center justify-between bg-[#141932] pl-[3px]"><Icon n="snap" /><Icon n="chev" s={12} /></button>
            </div>
            <div className="flex overflow-hidden rounded-[3px]">
              <Btn icon="dotring" label="Proportional editing" />
              <button aria-label="Falloff" className="flex h-[19px] w-[33px] items-center justify-between bg-[#14193260] pl-[4px] text-[#8a90a8]"><Icon n="bell" /><Icon n="chev" s={12} c="opacity-40" /></button>
            </div>
          </div>
          <div className="flex gap-[6px]">
            <EditorBtn icon="eyeCursor" label="Object visibility" />
            <div className="flex overflow-hidden rounded-[3px]"><Btn icon="gizmo" label="Show gizmo" on /><Arrow label="Gizmo options" /></div>
            <div className="flex overflow-hidden rounded-[3px]"><Btn icon="overlay" label="Show overlays" on /><Arrow label="Overlay options" /></div>
            <Btn icon="xray" label="X-ray" c="rounded-[3px] text-[#d0d4e8]!" />
            <div className="flex overflow-hidden rounded-[3px]">
              <Btn icon="wire" label="Wireframe shading" />
              <Btn icon="solid" label="Solid shading" on />
              <Btn icon="matprev" label="Material preview" />
              <Btn icon="rendered" label="Rendered shading" />
              <Arrow label="Shading options" />
            </div>
          </div>
        </div>
        <div className="mt-[7px] flex justify-between">
          <div className="flex gap-px overflow-hidden rounded-[3px]">
            {SELECT_MODES.map((art, i) => (
              <button key={i} aria-label={`Selection mode ${i + 1}`} className={`flex h-[19px] w-[18px] items-center justify-center ${i === 0 ? "bg-[#4767c5] text-white" : "bg-[#2d3770] text-[#b5bae0]"}`}>
                <svg viewBox="0 0 16 16" width="15" height="15" fill="none" stroke="currentColor" aria-hidden="true">{art}</svg>
              </button>
            ))}
          </div>
          <button className={`${BOX} flex items-center gap-[3px] pl-[7px] text-[#d0d4e8]`}>Options <Icon n="chev" s={12} /></button>
        </div>
        <div className="mt-[10px] flex flex-1 gap-[18px]">
          <div className="flex w-[38px] shrink-0 flex-col gap-[7px]">
            {TOOLS.map((g, gi) => (
              <div key={gi} className="flex shrink-0 flex-col gap-px overflow-hidden rounded-[4px] border border-[#262e60] bg-[#262e60]">
                {g.map((t) => (
                  <button key={t.name} aria-label={t.name} className={`relative flex h-[33px] items-center justify-center ${t.name === "Select Box" ? "bg-[#4767c5]" : "bg-[#171c3b]"}`}>
                    <svg viewBox="0 0 24 24" width="23" height="23" fill="none" stroke="#e6e6e6" strokeWidth="1.200" aria-hidden="true">{t.art}</svg>
                    {t.more && <svg className="absolute right-[2px] bottom-[2px]" width="4" height="4" aria-hidden="true"><path d="M4 0v4H0z" fill="#a9acc0" /></svg>}
                  </button>
                ))}
              </div>
            ))}
          </div>
          <div className="leading-[18px] font-medium text-white [text-shadow:0_1px_2px_#000]">
            <p>User Perspective</p>
            <p>(0) Collection | Plane</p>
          </div>
        </div>
      </div>
      <div className="absolute top-[180px] left-[57px] flex h-[26px] w-[26px] items-center justify-center rounded-full bg-[#2d2d2dcc] text-white">
        <svg viewBox="0 0 16 16" width="15" height="15" aria-hidden="true"><path d="M1 1h14v13H5v1H1z" fill="#fff" /><path d="M6 3h2v2H6zM10 3h2v2h-2zM8 5h2v2H8zM6 7h2v2H6zM10 7h2v2h-2zM8 9h2v2H8zM12 9h1v2h-1z" fill="#222" /></svg>
      </div>
      <AxisGizmo />
      <div className="absolute top-[142px] right-[9px] flex flex-col gap-[4px]">
        {NAV.map(([n, art]) => (
          <button key={n} aria-label={n} className="flex h-[26px] w-[26px] items-center justify-center rounded-full bg-[#2b2b2bcc]">
            <svg viewBox="0 0 16 16" width="16" height="16" fill="none" stroke="#e3e4ea" aria-hidden="true">{art}</svg>
          </button>
        ))}
      </div>
      <span className="absolute top-[66px] right-0 flex h-[14px] items-center rounded-l-[3px] bg-[#2b2b2b] text-[#c0c0c0]"><Icon n="chevL" s={9} /></span>
    </section>
  );
}

/* ---------- node editor ---------- */

type Row =
  | { t: "out" | "in"; l: string; c?: string }
  | { t: "num"; l: string; v: string; c?: string; fill?: string }
  | { t: "sel"; l: string }
  | { t: "chk"; l: string; on?: boolean; c?: string }
  | { t: "ramp" };

const G = "bg-[#00d6a3]";
const V = "bg-[#6363c7]";
const F = "bg-[#a1a1a1]";
const Y = "bg-[#c7c729]";
const I = "bg-[#598c5c]";
const B = "bg-[#cca6d6]";

const out = (l: string, c = F): Row => ({ t: "out", l, c });
const inp = (l: string, c?: string): Row => ({ t: "in", l, c });
const num = (l: string, v: string, c?: string, fill?: string): Row => ({ t: "num", l, v, c, fill });

type NodeDef = { x: number; y: number; w: number; h: number; title: string; k: keyof typeof HEAD; rows: Row[]; sel?: boolean };

const HEAD = {
  conv: "bg-[#175c94]",
  geo: "bg-[#0f6e69]",
  input: "bg-[#0f1328]",
  tex: "bg-[#713e29]",
  val: "bg-[#782a5a]",
};

const GROUP: Row[] = [out("Geometry", G), out("Bridge Length"), out("Bridge Height"), out("Bridge_Width"), out("Length of Planks"), out("Height of Planks"), out("", "bg-[#101328] ring-1 ring-[#a1a1a1]")];

const noise = (scale: string, rough: string, fill: string, lac: string, dist: string): Row[] => [
  out("Fac"), out("Color", Y), { t: "sel", l: "2D" }, { t: "chk", l: "Normalize", on: true }, inp("Vector", V),
  num("Scale", scale, F), num("Detail", "15.000", F), num("Roughne", rough, F, fill), num("Lacunari", lac, F), num("Distortion", dist, F),
];

const NODES: NodeDef[] = [
  { x: 119, y: 623, w: 58, h: 75, title: "Group Input", k: "input", rows: GROUP },
  { x: 339, y: 546, w: 57, h: 61, title: "Multiply", k: "conv", rows: [out("Value"), { t: "sel", l: "Multiply" }, { t: "chk", l: "Clamp" }, inp("Value", F), num("Value", "-1.000", F)] },
  { x: 457, y: 563, w: 58, h: 49, title: "Combine XYZ", k: "conv", rows: [out("Vector", V), inp("X", F), num("Y", "0.000", F), num("Z", "0.000", F)] },
  { x: 351, y: 623, w: 58, h: 49, title: "Combine XYZ", k: "conv", rows: [out("Vector", V), num("X", "0.000", F), num("Y", "0.000", F), inp("Z", F)] },
  { x: 355, y: 688, w: 57, h: 49, title: "Combine XYZ", k: "conv", rows: [out("Vector", V), inp("X", F), num("Y", "0.000", F), num("Z", "0.000", F)] },
  { x: 544, y: 598, w: 58, h: 58, title: "Quadratic Bezier", k: "geo", rows: [out("Curve", G), num("Resolution", "12", I), inp("Start", V), inp("Middle", V), inp("End", V)] },
  { x: 417, y: 848, w: 58, h: 76, title: "Group Input", k: "input", rows: GROUP },
  { x: 530, y: 803, w: 58, h: 61, title: "Multiply", k: "conv", rows: [out("Value"), { t: "sel", l: "Multiply" }, { t: "chk", l: "Clamp" }, inp("Value", F), num("Value", "2.200", F)] },
  { x: 639, y: 857, w: 57, h: 49, title: "Combine XYZ", k: "conv", rows: [out("Vector", V), inp("X", F), inp("Y", F), inp("Z", F)] },
  { x: 733, y: 845, w: 58, h: 68, title: "Cube", k: "geo", rows: [out("Mesh", G), out("UV Map", V), inp("Size", V), num("Vertices X", "3", I), num("Vertices Y", "6", I), num("Vertices Z", "3", I)] },
  { x: 755, y: 610, w: 58, h: 78, title: "Curve to Points", k: "geo", rows: [out("Points", G), out("Tangent", V), out("Normal", V), out("Rotation", V), { t: "sel", l: "Length" }, inp("Curve", G), inp("Length", F)] },
  { x: 868, y: 600, w: 58, h: 110, title: "Instance on Points", k: "geo", rows: [out("Instances", G), inp("Points", G), inp("Selection", B), inp("Instance", G), { t: "chk", l: "Pick Instance", c: B }, inp("Instance Index", I), inp("Rotation", V), inp("Scale:", V), num("X", "1.000"), num("Y", "1.000"), num("Z", "1.000")] },
  { x: 946, y: 604, w: 57, h: 118, title: "Rotate Instances", k: "geo", rows: [out("Instances", G), inp("Instances", G), inp("Selection", B), inp("Rotation:", V), num("X", "0°"), num("Y", "90°"), num("Z", "90°"), inp("Pivot Point:", V), num("X", "0 m"), num("Y", "0 m"), num("Z", "0 m"), { t: "chk", l: "Local Space", on: true, c: B }] },
  { x: 897, y: 769, w: 58, h: 107, title: "Noise Texture", k: "tex", rows: noise("2.000", "0.792", "w-[78%]", "0.600", "0.000") },
  { x: 991, y: 751, w: 99, h: 85, title: "Color Ramp", k: "conv", sel: true, rows: [out("Color", Y), out("Alpha"), { t: "ramp" }, inp("Fac", F)] },
  { x: 1126, y: 578, w: 58, h: 58, title: "Translate Instances", k: "geo", rows: [out("Instances", G), inp("Instances", G), inp("Selection", B), inp("Translation", V), { t: "chk", l: "Local Space", on: true, c: B }] },
  { x: 1120, y: 692, w: 58, h: 49, title: "Combine XYZ", k: "conv", rows: [out("Vector", V), num("X", "0.000", F), inp("Y", F), num("Z", "0.000", F)] },
  { x: 1220, y: 670, w: 58, h: 30, title: "Value", k: "val", rows: [out("Value"), num("", "0.000")] },
  { x: 1231, y: 720, w: 58, h: 107, title: "Noise Texture", k: "tex", rows: noise("9.800", "1.000", "w-full", "2.000", "1.300") },
  { x: 1433, y: 595, w: 58, h: 83, title: "Set Position", k: "geo", rows: [out("Geometry", G), inp("Geometry", G), inp("Selection", B), inp("Position", V), inp("Offset:", V), num("X", "0 m"), num("Y", "0 m"), num("Z", "0 m")] },
];

/* The canvas shows graph space from this corner. */
const LEFT = 1;
const TOP = 466;

function NodeRow({ r }: { r: Row }) {
  if (r.t === "ramp")
    return (
      <div className="flex flex-[5] flex-col justify-between px-[5px] pt-[4px] pb-[2px]">
        <div className="flex items-center gap-[6px] pl-[2px]">
          <button aria-label="Add stop"><Icon n="plus" s={6} /></button>
          <button aria-label="Remove stop"><svg width="4" height="2" aria-hidden="true"><path d="M0 1h4" stroke="#8a90b4" /></svg></button>
          <button aria-label="Ramp tools"><Icon n="chev" s={6} /></button>
          <span className="flex-1" />
          <span className="relative flex gap-px">
            <select aria-label="Color mode" className="h-[8px] w-[25px] appearance-none bg-[#141932] px-[2px]"><option>RGB</option></select>
            <select aria-label="Interpolation" className="h-[8px] w-[26px] appearance-none bg-[#141932] px-[2px]"><option>Linear</option></select>
            <Icon n="chev" s={5} c="pointer-events-none absolute top-[2px] left-[20px]" />
            <Icon n="chev" s={5} c="pointer-events-none absolute top-[2px] right-0" />
          </span>
        </div>
        <div className="relative h-[6px] bg-linear-to-r from-black from-[33%] to-white">
          <span className="absolute -bottom-[2px] left-[31%] h-[3px] w-[3px] bg-black" />
          <span className="absolute -right-px -bottom-[2px] h-[3px] w-[3px] bg-white" />
        </div>
        <div className="flex h-[8px] gap-[4px]">
          <input aria-label="Stop" defaultValue="1" className="w-[26px] bg-[#2d3770] text-center" />
          <label className="flex min-w-0 flex-1 items-center bg-[#2d3770] px-[5px]">Pos<input defaultValue="1.000" className="w-0 flex-1 bg-transparent text-right" /></label>
        </div>
        <div className="h-[6px] bg-white" />
      </div>
    );
  const dot = "c" in r && r.c ? <i className={`absolute h-[3px] w-[3px] rounded-full ${r.c} ${r.t === "out" ? "-right-[2px]" : "-left-[2px]"}`} /> : null;
  if (r.t === "out") return <div className="relative flex flex-1 items-center justify-end pr-[5px]">{r.l}{dot}</div>;
  if (r.t === "in") return <div className="relative flex flex-1 items-center pl-[5px]">{r.l}{dot}</div>;
  if (r.t === "sel")
    return (
      <div className="relative flex flex-[1.3] items-center px-[4px]">
        <select aria-label={r.l} className="h-[8px] w-full appearance-none border border-[#262e60] bg-[#141932] px-[2px] leading-[6px]"><option>{r.l}</option></select>
        <Icon n="chev" s={5} c="pointer-events-none absolute right-[5px]" />
      </div>
    );
  if (r.t === "chk")
    return (
      <label className="relative flex flex-1 items-center gap-[2px] pl-[5px]">
        <input type="checkbox" defaultChecked={r.on} className="h-[5px] w-[5px] appearance-none bg-[#2d3770] checked:bg-[#5f86ee]" />
        {r.on && <svg viewBox="0 0 5 5" width="5" height="5" className="pointer-events-none absolute left-[5px]" fill="none" stroke="#fff" strokeWidth=".9" aria-hidden="true"><path d="M1 2.500l1.200 1.200L4.200 1.200" /></svg>}
        {r.l}{dot}
      </label>
    );
  return (
    <div className="relative flex flex-1 items-center px-[4px]">
      <label className="relative flex h-[7px] w-full items-center bg-[#2d3770] px-[5px]">
        {r.fill && <span className={`absolute inset-y-0 left-0 bg-[#4767c5] ${r.fill}`} />}
        <span className="relative">{r.l}</span>
        <input aria-label={r.l || "Value"} defaultValue={r.v} className={`relative w-0 min-w-0 flex-1 bg-transparent outline-none ${r.l ? "text-right" : "text-center"}`} />
      </label>
      {dot}
    </div>
  );
}

const LINKS: { c: string; w?: number; o?: number; dash?: string; p: P[] }[] = [
  { c: "#00d6a3", w: 1.5, o: 0.3, p: [[1330, 466], [1585, 515]] },
  { c: "#00d6a3", p: [[1585, 719], [1121, 946], [990, 981]] },
  { c: "#a1a1a1", p: [[178, 646], [338, 591]] },
  { c: "#a1a1a1", p: [[178, 646], [354, 713]] },
  { c: "#a1a1a1", p: [[178, 655], [350, 666]] },
  { c: "#a1a1a1", p: [[397, 559], [456, 587]] },
  { c: "#6363c7", p: [[516, 576], [543, 631]] },
  { c: "#6363c7", p: [[410, 637], [543, 641]] },
  { c: "#6363c7", p: [[413, 702], [543, 650]] },
  { c: "#00d6a3", p: [[603, 612], [754, 673]] },
  { c: "#a1a1a1", p: [[588, 811], [754, 682]] },
  { c: "#a1a1a1", p: [[588, 817], [638, 890]] },
  { c: "#a1a1a1", p: [[476, 890], [529, 848]] },
  { c: "#a1a1a1", p: [[476, 899], [529, 857]] },
  { c: "#a1a1a1", p: [[476, 899], [638, 881]] },
  { c: "#a1a1a1", p: [[476, 909], [638, 900]] },
  { c: "#6363c7", p: [[697, 871], [732, 879]] },
  { c: "#00d6a3", p: [[792, 859], [868, 642]] },
  { c: "#00d6a3", p: [[814, 625], [867, 624]] },
  { c: "#6363c7", w: 1, o: 0.7, dash: "3 1", p: [[814, 652], [867, 670]] },
  { c: "#00d6a3", p: [[926, 613], [945, 628]] },
  { c: "#00d6a3", p: [[1004, 618], [1125, 602]] },
  { c: "#00d6a3", p: [[1184, 592], [1432, 620]] },
  { c: "#6363c7", w: 1, o: 0.8, dash: "3 1", p: [[1169, 691], [1136, 637]] },
  { c: "#a1a1a1", w: 1, dash: "4 1", p: [[956, 784], [990, 830]] },
  { c: "#b0b090", w: 1, dash: "4 1", p: [[1092, 764], [1120, 725]] },
  { c: "#00d6a3", p: [[1492, 609], [1585, 600]] },
];

const FRAMES = [
  { x: 226, y: 440, w: 483, h: 42, label: "", lx: 0 },
  { x: 105, y: 529, w: 510, h: 222, label: "MID", lx: 360 },
  { x: 741, y: 582, w: 276, h: 152, label: "Planks Instance", lx: 879 },
  { x: 403, y: 785, w: 401, h: 152, label: "Wood Plank", lx: 603 },
];

function NodeEditor() {
  return (
    <section className="flex min-h-0 flex-1 flex-col overflow-hidden rounded-[5px] bg-[#101328]">
      <div className="flex h-[25px] shrink-0 items-center bg-[#181c38] px-[8px] text-[#c4c8de]">
        <div className="flex flex-1 items-center">
          <EditorBtn icon="geo" label="Geometry node editor" />
          <div className="w-[6px]" />
          <Drop label="Node tree type" value="Modifier" w="w-[79px]" />
          <div className="ml-[11px] flex gap-[14px]">
            {["View", "Select", "Add", "Node"].map((m) => <button key={m}>{m}</button>)}
          </div>
        </div>
        <div className="mr-[22px] flex items-center">
          <div className={`${BOX} flex items-center overflow-hidden`}>
            <button aria-label="Browse node tree" className="flex h-full w-[28px] items-center justify-between pl-[2px]"><Icon n="tree" /><Icon n="chev" s={11} /></button>
            <input aria-label="Node tree name" defaultValue="Brifge" className="h-full w-[119px] bg-[#0f1328] px-[6px] text-[#d8dcf0]" />
            <Btn icon="shield" label="Fake user" />
            <Btn icon="copy" label="Duplicate node tree" c="w-[21px]! border-x border-[#1c2145] text-[#d8dcf0]!" />
            <Btn icon="x" label="Unlink node tree" c="text-[#d8dcf0]!" />
          </div>
          <Icon n="pin" c="ml-[8px] text-[#8a90b4]" />
        </div>
        <div className="flex flex-1 items-center justify-end gap-[6px]">
          <button aria-label="Parent node tree" className="flex h-[19px] w-[20px] items-center justify-center rounded-[3px] bg-[#1f2650] text-[#5a628f]"><Icon n="up" /></button>
          <div className="flex overflow-hidden rounded-[3px]">
            <Btn icon="magnet" label="Snap nodes" />
            <button aria-label="Snap to" className="flex h-[19px] w-[32px] items-center justify-between bg-[#141932] pl-[3px]"><Icon n="snapNode" /><Icon n="chev" s={12} /></button>
          </div>
          <div className="flex overflow-hidden rounded-[3px]"><Btn icon="overlay" label="Show node overlays" on /><Arrow label="Node overlay options" /></div>
        </div>
      </div>
      <div className="relative min-h-0 flex-1 overflow-hidden bg-[radial-gradient(circle,#1d2138_1px,transparent_1px)] bg-[size:42px_42px] bg-[position:21px_19px]">
        {FRAMES.map((f) => (
          <div key={f.y} className="absolute rounded-[3px] bg-[#060811f0]" style={{ left: f.x - LEFT, top: f.y - TOP, width: f.w, height: f.h }}>
            {f.label && <span className="absolute top-[6px] -translate-x-1/2 text-[9px] leading-[12px] whitespace-nowrap text-[#94969f]" style={{ left: f.lx - f.x }}>{f.label}</span>}
          </div>
        ))}
        <div className="absolute top-0 left-[459px] h-[4px] w-[58px] border-t-2 border-[#2d3770] bg-[#1b2042]" />
        <svg viewBox={`${LEFT} ${TOP} 1584 514`} width="1584" height="514" className="absolute top-0 left-0" fill="none" aria-hidden="true">
          {LINKS.map((l, i) => (
            <polyline key={i} points={line(l.p)} stroke={l.c} strokeWidth={l.w ?? 1.7} opacity={l.o ?? 1} strokeDasharray={l.dash} />
          ))}
        </svg>
        {NODES.map((n, i) => (
          <article key={i} className={`absolute flex flex-col bg-[#1b2042] text-[5px] leading-[7px] whitespace-nowrap text-[#d4d7e6] ${n.sel ? "outline outline-white" : "shadow-[0_0_2px_1px_#04050c]"}`} style={{ left: n.x - LEFT, top: n.y - TOP, width: n.w, height: n.h }}>
            <h3 className={`flex h-[8px] shrink-0 items-center gap-[2px] pl-[4px] ${HEAD[n.k]}`}>
              <Icon n="chev" s={6} />{n.title}
            </h3>
            <div className="flex min-h-0 flex-1 flex-col pt-px pb-px">
              {n.rows.map((r, j) => <NodeRow key={j} r={r} />)}
            </div>
          </article>
        ))}
        <nav aria-label="Node tree path" className="absolute top-[14px] left-0 flex h-[16px] items-center text-[#d0d4e8]">
          <Icon n="chevR" s={9} c="-ml-px" />
          <Icon n="object" c="ml-[10px]" />
          <a href="#plane" className="ml-[8px]">Plane</a>
          <Icon n="chevR" s={12} c="ml-[14px]" />
          <Icon n="geo" c="ml-[5px]" />
          <a href="#geometrynodes" className="ml-[8px]">GeometryNodes</a>
          <Icon n="chevR" s={12} c="ml-[14px]" />
          <Icon n="tree" c="ml-[6px]" />
          <a href="#brifge" className="ml-[8px]">Brifge</a>
        </nav>
        <span className="absolute top-[17px] right-0 text-[#c0c4d0]"><Icon n="chevL" s={9} /></span>
        <div className="absolute top-[115px] right-px h-[256px] w-[3px] rounded bg-[#1c2145]" />
        <div className="absolute bottom-[3px] left-[8px] h-[3px] w-[73%] rounded bg-[#1f2549]" />
      </div>
    </section>
  );
}

/* ---------- timeline ---------- */

function Timeline() {
  const frames = Array.from({ length: 26 }, (_, i) => i * 10);
  return (
    <section className="relative shrink-0 overflow-hidden rounded-[5px] bg-[#101328]">
      <div className="flex h-[25px] items-center bg-[#1c2145] px-[8px] text-[#c4c8de]">
        <div className="flex flex-1 items-center">
          <EditorBtn icon="clock" label="Timeline editor" />
          <div className={`${BOX} ml-[6px] flex items-center`}>
            <button className="flex items-center gap-[4px] pl-[7px]">Playback <Icon n="chev" s={12} /></button>
            <button className="flex h-full items-center gap-[4px] border-l border-[#262e60] pl-[6px]">Keying <Icon n="chev" s={12} /></button>
          </div>
          <button className="ml-[9px]">View</button>
          <button className="ml-[15px]">Marker</button>
        </div>
        <div className="mr-[22px] flex gap-[6px]">
          <div className="flex overflow-hidden rounded-[3px]">
            <Btn icon="record" label="Auto keying" c="text-[#d8dcf0]!" />
            <Arrow label="Auto keying options" c="bg-[#181c3a]! text-[#4a5284]!" />
          </div>
          <div className="flex gap-px overflow-hidden rounded-[3px]">
            {["first", "prevKey", "playBack", "play", "nextKey", "last"].map((n) => <Btn key={n} icon={n} label={n} c="text-[#d8dcf0]!" />)}
          </div>
        </div>
        <div className="flex flex-1 items-center justify-end gap-[6px]">
          <input aria-label="Current frame" defaultValue="0" className="h-[19px] w-[74px] rounded-[3px] bg-[#2d3770] text-center" />
          <div className="flex gap-px overflow-hidden rounded-[3px]">
            <Btn icon="stopwatch" label="Use preview range" c="text-[#d8dcf0]!" />
            <label className="flex h-[19px] w-[87px] items-center bg-[#2d3770] px-[14px]">Start<input defaultValue="1" className="w-0 flex-1 bg-transparent text-right" /></label>
            <label className="flex h-[19px] w-[84px] items-center bg-[#2d3770] px-[13px]">End<input defaultValue="250" className="w-0 flex-1 bg-transparent text-right" /></label>
          </div>
        </div>
      </div>
      <div className="flex h-[23px] items-center pr-[29px] pl-[23px]">
        {frames.map((f) => (
          <div key={f} className="flex flex-1 justify-center">
            <span className={f === 0 ? "relative z-10 rounded-[3px] bg-[#4767c5] px-[9px] leading-[17px] text-white" : "text-[#6d76b4]"}>{f}</span>
          </div>
        ))}
      </div>
      <div className="flex h-[28px] bg-[#0b1136] pr-[57px] pl-[52px]">
        {frames.slice(1).map((f) => (
          <div key={f} className="flex flex-1 border-l border-[#0f1328] bg-[#1b2042]">
            <div className="w-1/2 border-r border-[#171c38]" />
          </div>
        ))}
      </div>
      <div className="absolute top-[43px] bottom-0 left-[52px] w-[2px] bg-[#5073d0]" />
      <div className="absolute right-[7px] bottom-[3px] left-[8px] flex h-[7px] items-center justify-between rounded-full bg-[#303a76] px-px">
        <i className="h-[5px] w-[5px] rounded-full bg-[#3c1450]" />
        <i className="h-[5px] w-[5px] rounded-full bg-[#3c1450]" />
      </div>
      <span className="absolute bottom-[24px] left-0 text-[#9ca2c8]"><Icon n="chevR" s={9} /></span>
      <span className="absolute right-0 bottom-[24px] text-[#9ca2c8]"><Icon n="chevL" s={9} /></span>
    </section>
  );
}

/* ---------- outliner ---------- */

function Outliner() {
  return (
    <section className="flex h-[286px] shrink-0 flex-col overflow-hidden rounded-[5px] bg-[#181c38] text-[#a3a9d3]">
      <div className="flex h-[26px] shrink-0 items-center px-[7px]">
        <EditorBtn icon="outliner" label="Outliner editor" />
        <div className="w-[6px]" />
        <EditorBtn icon="layers" label="Display mode" />
        <label className="mx-auto flex h-[19px] w-[114px] items-center rounded-[3px] border border-[#262e60] bg-[#0f1328] px-[4px] text-[#d0d4e8]">
          <Icon n="search" />
          <input type="search" aria-label="Search outliner" className="w-full bg-transparent outline-none" />
        </label>
        <div className="w-[34px]" />
        <EditorBtn icon="funnel" label="Filter" />
        <Btn icon="boxPlus" label="New collection" c="ml-[6px] rounded-[3px] text-[#d0d4e8]!" />
      </div>
      <ul className="min-h-0 flex-1 bg-[repeating-linear-gradient(#181c38_0_20px,#1b1f3b_20px_40px)]">
        <li className="flex h-[20px] items-center pl-[22px]"><Icon n="box" c="text-[#d6d6d6]" /><span className="ml-[7px]">Scene Collection</span></li>
        <li className="flex h-[20px] items-center gap-[6px] pr-[12px] pl-[26px]">
          <button aria-label="Collapse Collection" className="text-[7px]">▼</button>
          <span className="ml-px flex h-[18px] w-[19px] items-center justify-center rounded-[4px] border border-[#5b6082] bg-[#3a3f63]"><Icon n="box" s={14} c="text-[#e0e0e0]" /></span>
          <span className="-ml-px flex-1">Collection</span>
          <label className="relative flex items-center">
            <input type="checkbox" defaultChecked aria-label="Exclude Collection" className="h-[10px] w-[10px] appearance-none rounded-[1px] bg-[#d8dcf0]" />
            <svg viewBox="0 0 10 10" width="10" height="10" className="pointer-events-none absolute left-0" fill="none" stroke="#181c38" strokeWidth="1.800" aria-hidden="true"><path d="M2 5l2.200 2.200L8.200 2.800" /></svg>
          </label>
          <button aria-label="Hide Collection" className="text-[#d8dcf0]"><Icon n="eye" s={14} /></button>
          <button aria-label="Disable Collection in renders" className="text-[#d8dcf0]"><Icon n="camera" s={14} /></button>
        </li>
        <li className="flex h-[20px] items-center gap-[6px] pr-[12px] pl-[29px]">
          <span className="h-[10px] w-px bg-[#4b5078]" />
          <button aria-label="Expand Plane" className="ml-[11px] text-[7px]">▶</button>
          <span className="flex h-[18px] w-[19px] items-center justify-center rounded-[4px] border border-[#5b6082] bg-[#3a3f63]"><Icon n="tri" s={14} c="text-[#c98a55]" /></span>
          <span className="-ml-px">Plane</span>
          <Icon n="wrench" c="ml-[16px] text-[#5680d8]" />
          <Icon n="mesh" c="text-[#00c48f]" />
          <span className="flex-1" />
          <button aria-label="Hide Plane" className="text-[#d8dcf0]"><Icon n="eye" s={14} /></button>
          <button aria-label="Disable Plane in renders" className="text-[#d8dcf0]"><Icon n="camera" s={14} /></button>
        </li>
      </ul>
    </section>
  );
}

/* ---------- properties ---------- */

const PTABS: [string, string][][] = [
  [["tool", "text-[#9096b8]"]],
  [["render", "text-[#9096b8]"], ["output", "text-[#9096b8]"], ["layers", "text-[#9096b8]"], ["scene", "text-[#9096b8]"], ["world", "text-[#b8555f]"]],
  [["boxLine", "text-[#d0d4e8]"]],
  [["object", "text-[#c07f45]"], ["wrenchFill", "text-[#6f96f5]"], ["particles", "text-[#4f74c4]"], ["physics", "text-[#5680d8]"], ["constraint", "text-[#5680d8]"], ["mesh", "text-[#00c48f]"], ["material", "text-[#b8555f]"]],
  [["checker", "text-[#b8555f]"]],
];

const FIELDS = [["Bridge Length", "10.960"], ["Bridge Height", "6.340"], ["Bridge_Width", "5.220"], ["Length of Planks", "2.04 m"], ["Height of Planks", "0.260"]];

function Properties() {
  return (
    <section className="flex min-h-0 flex-1 flex-col overflow-hidden rounded-[5px] bg-[#1b2042] text-[#c9cde4]">
      <div className="flex h-[25px] shrink-0 items-center px-[8px]">
        <EditorBtn icon="props" label="Properties editor" />
        <label className="mr-auto ml-[70px] flex h-[19px] w-[114px] items-center rounded-[3px] border border-[#262e60] bg-[#0f1328] px-[4px]">
          <Icon n="search" />
          <input type="search" aria-label="Search properties" className="w-full bg-transparent outline-none" />
        </label>
        <button aria-label="Properties options" className={`${BOX} w-[19px] pl-[3px]`}><Icon n="chev" s={12} /></button>
      </div>
      <div className="flex min-h-0 flex-1">
        <div role="tablist" aria-label="Property tabs" className="flex w-[28px] shrink-0 flex-col gap-[10px] bg-[#101328] pt-[9px]">
          {PTABS.map((g, i) => (
            <div key={i} className="flex flex-col gap-[2px] pl-[2px]">
              {g.map(([n, c]) => (
                <button key={n} role="tab" aria-label={n} aria-selected={n === "wrenchFill"} className={`flex h-[26px] items-center justify-center rounded-l-[4px] ${n === "wrenchFill" ? "bg-[#1b2042]" : ""} ${c}`}><Icon n={n} /></button>
              ))}
            </div>
          ))}
        </div>
        <div className="flex min-w-0 flex-1 flex-col pr-[9px] pl-[8px]">
          <div className="flex h-[36px] items-center pl-[2px]">
            <Icon n="object" /><span className="ml-[8px]">Plane</span>
            <Icon n="chevR" s={13} c="mx-[11px]" />
            <Icon n="geo" /><span className="ml-[8px] flex-1">GeometryNodes</span>
            <Icon n="pin" c="text-[#8a90b4]" />
          </div>
          <div className="mt-[8px] grid grid-cols-2 gap-px overflow-hidden rounded-[3px]">
            {[["download", "Apply All"], ["x", "Delete All"], ["monitor", "Viewport Vis"], ["expand", "Toggle Stack"]].map(([n, t]) => (
              <button key={t} className="flex h-[19px] items-center bg-[#2d3770] pl-[4px]"><Icon n={n} /><span className="flex-1">{t}</span></button>
            ))}
          </div>
          <button className="mt-[6px] flex h-[19px] items-center rounded-[3px] bg-[#2d3770] pl-[4px]"><Icon n="plus" /><span className="flex-1">Add Modifier</span></button>
          <div className="mt-[11px] flex flex-col rounded-[4px] border border-[#4767c5] bg-[#232956] pt-[3px] pb-[2px]">
            <div className="flex items-center pl-[4px]">
              <button aria-label="Collapse modifier" className="text-[#8a90b4]"><Icon n="chev" /></button>
              <Icon n="geo" c="ml-[3px]" />
              <div className="ml-[11px] flex h-[18px] gap-px overflow-hidden rounded-[3px] bg-[#101328]">
                <input aria-label="Modifier name" defaultValue="GeometryNo..." className="w-[87px] bg-transparent pl-[7px]" />
                <Btn icon="mesh" label="Show on cage" c="text-[#d8dcf0]!" />
                <Btn icon="editbox" label="Show in edit mode" on />
                <Btn icon="monitor" label="Show in viewport" on />
                <Btn icon="camera" label="Show in render" on />
                <Arrow label="Modifier options" c="w-[19px]!" />
              </div>
              <button aria-label="Remove modifier" className="ml-[4px]"><Icon n="x" /></button>
              <span className="mr-[6px] ml-auto h-[5px] w-[11px] bg-[radial-gradient(circle,#8a90b4_0.8px,transparent_1px)] bg-[size:3px_3px]" />
            </div>
            <div className="mx-[8px] mt-[12px] mb-[7px] flex h-[18px] gap-px overflow-hidden rounded-[3px]">
              <button aria-label="Browse node group" className="flex w-[30px] items-center justify-between bg-[#141932] pl-[3px]"><Icon n="tree" /><Icon n="chev" s={11} /></button>
              <input aria-label="Node group" defaultValue="Brifge" className="min-w-0 flex-1 bg-[#0f1328] px-[7px]" />
              <Btn icon="shield" label="Fake user" /><Btn icon="copy" label="Duplicate" c="text-[#d8dcf0]!" /><Btn icon="x" label="Unlink" c="text-[#d8dcf0]!" />
            </div>
            <div className="flex flex-col gap-[7px]">
              {FIELDS.map(([l, v]) => (
                <label key={l} className="flex h-[18px] items-center">
                  <span className="w-[102px] text-right">{l}</span>
                  <input defaultValue={v} className="ml-[10px] h-[18px] min-w-0 flex-1 rounded-[3px] bg-[#2d3770] text-center" />
                  <i className="mr-[15px] ml-[29px] h-[4px] w-[4px] rounded-full bg-[#c9cde4]" />
                </label>
              ))}
            </div>
            {["Output Attributes", "Internal Dependencies"].map((t, i) => (
              <button key={t} className={`flex h-[18px] items-center gap-[3px] pl-[20px] ${i ? "mt-[7px]" : "mt-[13px]"}`}><Icon n="chevR" s={12} c="text-[#8a90b4]" />{t}</button>
            ))}
          </div>
        </div>
      </div>
    </section>
  );
}

/* ---------- status bar ---------- */

function Mouse({ k }: { k: number }) {
  return (
    <svg viewBox="0 0 12 16" width="12" height="15" fill="none" stroke="#fff" aria-hidden="true">
      <rect x="1.500" y=".8" width="9" height="14" rx="3" />
      {k === 0 && <path d="M1.500 7V3q1-2 4-2v6z" fill="#fff" />}
      {k === 1 && <path d="M6 3.500v4" strokeWidth="2.500" />}
      {k === 2 && <path d="M10.500 7V3q-1-2-4-2v6z" fill="#fff" />}
    </svg>
  );
}

export default function App() {
  return (
    <main className="flex h-screen w-full flex-col overflow-hidden bg-[#0b0e1c] font-['Inter',sans-serif] text-[11px] leading-[14px]">
      <TitleBar />
      <TopBar />
      <div className="flex min-h-0 flex-1 gap-[3px] px-px">
        <div className="flex min-w-0 flex-1 flex-col gap-[3px]">
          <div className="flex h-[388px] shrink-0 gap-[3px]">
            <Spreadsheet />
            <Viewport />
          </div>
          <NodeEditor />
          <Timeline />
        </div>
        <div className="flex w-[331px] shrink-0 flex-col gap-[3px]">
          <Outliner />
          <Properties />
        </div>
      </div>
      <footer className="flex h-[21px] shrink-0 items-center bg-[#0f1224] px-[11px] text-white">
        {["Select", "Pan View", "Node"].map((t, i) => (
          <span key={t} className="flex w-[211px] items-center gap-[11px]"><Mouse k={i} />{t}</span>
        ))}
        <span className="flex-1 text-right">4.0.0</span>
      </footer>
    </main>
  );
}
